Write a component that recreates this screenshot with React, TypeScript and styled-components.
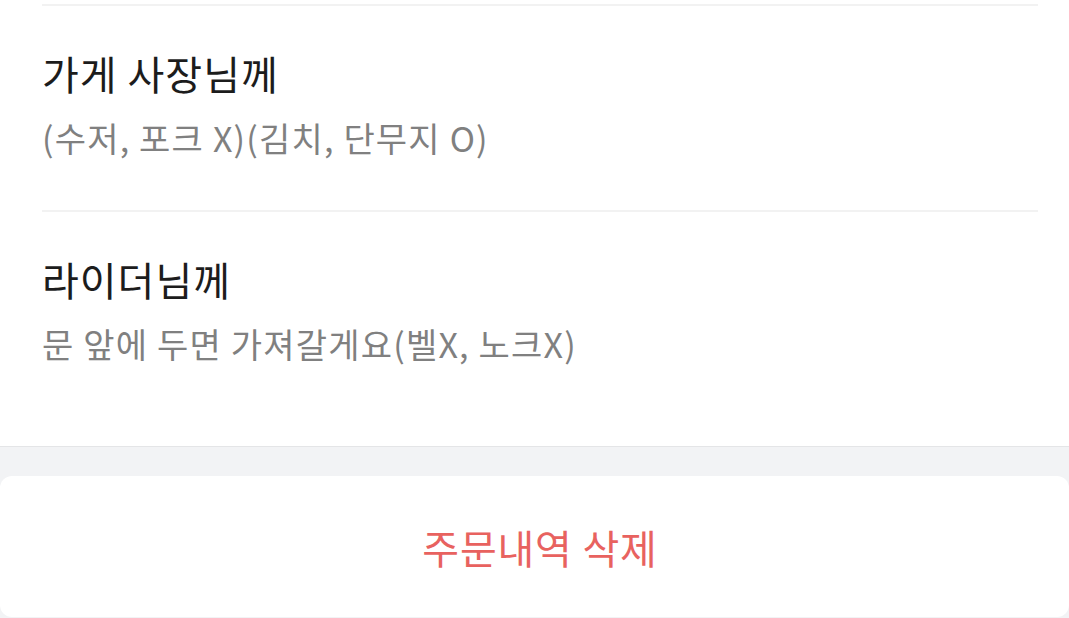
import React from "react";
import styled, { createGlobalStyle } from "styled-components";

const Global = createGlobalStyle`
  html, body { margin: 0; padding: 0; background: #f2f3f5; }
  body { font-family: "Noto Sans CJK KR", "Noto Sans", sans-serif; }
  * { box-sizing: border-box; }
`;

const Page = styled.div`
  width: 1069px;
  height: 618px;
  overflow: hidden;
  display: flex;
  flex-direction: column;
  background: #f2f3f5;
`;

const Section = styled.section`
  background: #fff;
  padding: 4px 31px 0 42px;
  border-bottom: 1px solid #e4e5e7;
`;

const Item = styled.div<{ $last?: boolean }>`
  border-top: 2px solid #f2f2f2;
  padding: 42px 0 ${(p) => (p.$last ? "79px" : "49px")};
  display: flex;
  flex-direction: column;
  gap: 17px;
`;

const Title = styled.div`
  font-size: 40px;
  line-height: 50px;
  color: #1c1c1c;
  font-weight: 400;
  letter-spacing: 1px;
`;

const Note = styled.div`
  font-size: 34px;
  line-height: 46px;
  color: #808080;
  letter-spacing: 1.2px;
`;

const Gap = styled.div`
  height: 29px;
  flex: none;
`;

const Card = styled.button`
  flex: none;
  height: 141px;
  border: none;
  background: #fff;
  border-radius: 12px;
  display: flex;
  align-items: center;
  justify-content: center;
  font-family: inherit;
  font-size: 40px;
  letter-spacing: 0.8px;
  color: #e8625f;
  padding: 0 0 0 11px;
`;

export default function App() {
  return (
    <Page>
      <Global />
      <Section>
        <Item>
          <Title>가게 사장님께</Title>
          <Note>(수저, 포크 X)(김치, 단무지 O)</Note>
        </Item>
        <Item $last>
          <Title>라이더님께</Title>
          <Note>문 앞에 두면 가져갈게요(벨X, 노크X)</Note>
        </Item>
      </Section>
      <Gap />
      <Card>주문내역 삭제</Card>
    </Page>
  );
}
